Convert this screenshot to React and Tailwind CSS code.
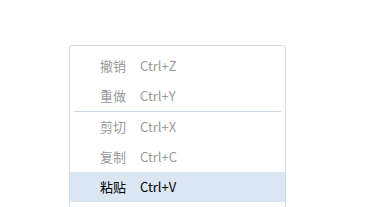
import React from "react";

const items = [
  { label: "撤销", key: "Ctrl+Z" },
  { label: "重做", key: "Ctrl+Y" },
  { sep: true },
  { label: "剪切", key: "Ctrl+X" },
  { label: "复制", key: "Ctrl+C" },
  { label: "粘贴", key: "Ctrl+V", active: true },
];

export default function App() {
  return (
    <div className="w-[379px] h-[207px] overflow-hidden bg-white pt-[45px] pl-[69px]">
      <div
        className="w-[217px] border border-[#d3dbe4] rounded-[3px] bg-white pt-[5px] pb-[5px] text-[13px]"
        style={{ fontFamily: '"Noto Sans CJK SC", sans-serif' }}
      >
        {items.map((it, i) =>
          it.sep ? (
            <div key={i} className="h-px mx-[4px] bg-[#c9d5e2]" />
          ) : (
            <div
              key={i}
              className={
                "h-[30px] flex items-center pl-[30px] " +
                (it.active ? "bg-[#dae6f2] text-black" : "text-[#9a9a9a]")
              }
            >
              <span className="w-[40px]">{it.label}</span>
              <span>{it.key}</span>
            </div>
          )
        )}
      </div>
    </div>
  );
}
